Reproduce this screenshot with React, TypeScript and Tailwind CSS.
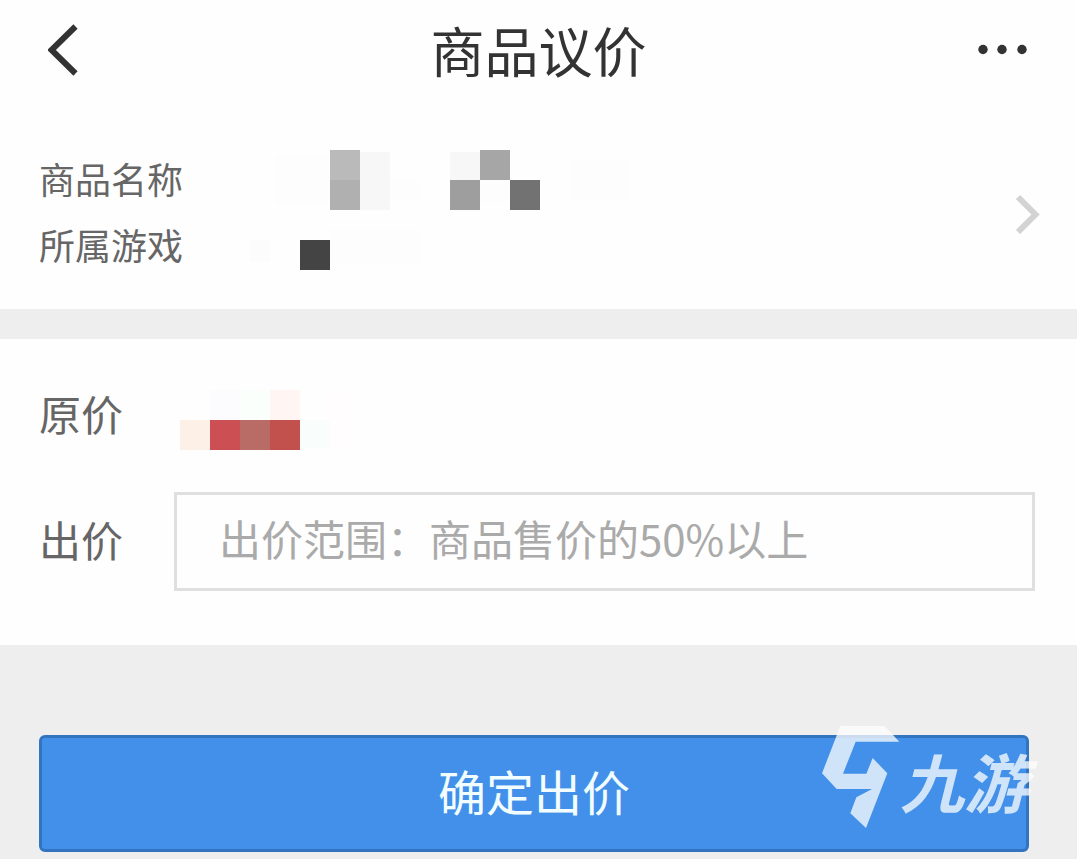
import { useState } from 'react';

// 30px blocks that hide the product name and the game name
const infoBlocks = [
  { x: 35, y: 10, w: 55, h: 50, fill: '#fdfdfd' },
  { x: 90, y: 5, w: 30, h: 30, fill: '#bababa' },
  { x: 90, y: 35, w: 30, h: 30, fill: '#b0b0b0' },
  { x: 120, y: 7, w: 30, h: 58, fill: '#f7f7f7' },
  { x: 150, y: 35, w: 30, h: 20, fill: '#fdfdfd' },
  { x: 210, y: 7, w: 30, h: 28, fill: '#f7f7f7' },
  { x: 240, y: 5, w: 30, h: 30, fill: '#a6a6a6' },
  { x: 210, y: 35, w: 30, h: 30, fill: '#9e9e9e' },
  { x: 240, y: 35, w: 30, h: 22, fill: '#fdfdfd' },
  { x: 270, y: 35, w: 30, h: 30, fill: '#727272' },
  { x: 330, y: 14, w: 60, h: 40, fill: '#fdfdfd' },
  { x: 10, y: 95, w: 20, h: 22, fill: '#fcfcfc' },
  { x: 60, y: 95, w: 30, h: 30, fill: '#444444' },
  { x: 90, y: 84, w: 90, h: 36, fill: '#fdfdfd' },
];

const priceBlocks = [
  { x: 36, y: 7, w: 30, h: 30, fill: '#fcfcff' },
  { x: 66, y: 7, w: 30, h: 30, fill: '#fafffc' },
  { x: 96, y: 7, w: 30, h: 30, fill: '#fff6f3' },
  { x: 6, y: 37, w: 30, h: 30, fill: '#fdf1e7' },
  { x: 36, y: 37, w: 30, h: 30, fill: '#cb4f53' },
  { x: 66, y: 37, w: 30, h: 30, fill: '#b96b66' },
  { x: 96, y: 37, w: 30, h: 30, fill: '#c2504c' },
  { x: 126, y: 37, w: 30, h: 28, fill: '#f9fefc' },
  { x: 156, y: 7, w: 26, h: 56, fill: '#fffdfd' },
];

type Block = { x: number; y: number; w: number; h: number; fill: string };

function Mosaic({ blocks, width, height }: { blocks: Block[]; width: number; height: number }) {
  return (
    <svg width={width} height={height} className="shrink-0" shapeRendering="crispEdges" aria-hidden="true">
      {blocks.map(b => (
        <rect key={`${b.x}-${b.y}`} x={b.x} y={b.y} width={b.w} height={b.h} fill={b.fill} />
      ))}
    </svg>
  );
}

function Header() {
  return (
    <header className="grid h-[100px] grid-cols-[1fr_auto_1fr] items-center px-12">
      <button type="button" aria-label="返回" className="justify-self-start">
        <svg width="30" height="52" viewBox="0 0 30 52" fill="none" stroke="#333333" strokeWidth="6">
          <path d="M27.5 2.5 L3.5 26 L27.5 49.5" />
        </svg>
      </button>
      <h1 className="text-[54px] leading-none text-[#333333]">商品议价</h1>
      <button type="button" aria-label="更多" className="justify-self-end">
        <svg width="52" height="12" viewBox="0 0 52 12" fill="#333333">
          <circle cx="6" cy="5.5" r="4.7" />
          <circle cx="25" cy="5.5" r="4.7" />
          <circle cx="45" cy="5.5" r="4.7" />
        </svg>
      </button>
    </header>
  );
}

function ProductInfo() {
  return (
    <a href="#product" className="flex items-center justify-between pt-[45px] pr-9 pb-8 pl-[39px]">
      <div className="flex">
        <div className="w-[201px] text-4xl leading-[66px] text-[#666666]">
          <p>商品名称</p>
          <p>所属游戏</p>
        </div>
        <Mosaic blocks={infoBlocks} width={390} height={132} />
      </div>
      <svg width="26" height="46" viewBox="0 0 26 46" fill="none" stroke="#d3d3d3" strokeWidth="6" aria-hidden="true">
        <path d="M3 9 L20.5 26.5 L3 44" />
      </svg>
    </a>
  );
}

function Watermark() {
  return (
    <div className="pointer-events-none absolute top-[81px] right-[49px] flex text-white opacity-75">
      <svg width="78" height="102" viewBox="0 0 234 306" fill="currentColor" aria-hidden="true">
        <path d="M55 0 H188 L232 47 H101 L63 143 H133 L152 96 L196 142 L132 306 L85 262 L103 214 L150 189 H44 L0 142 Z" />
      </svg>
      <span className="pt-6 text-[64px] leading-[60px] font-bold italic">九游</span>
    </div>
  );
}

export default function App() {
  const [offer, setOffer] = useState('');

  return (
    <div className="min-h-screen bg-[#eeeeee] font-['Noto_Sans_CJK_SC',sans-serif]">
      <div className="bg-[#fefefe]">
        <Header />
        <ProductInfo />
      </div>

      <form onSubmit={e => e.preventDefault()}>
        <div className="mt-[30px] bg-[#fefefe] pt-11 pr-[42px] pb-[54px] pl-[39px] text-[42px] text-[#666666]">
          <div className="flex">
            <span className="w-[135px] leading-[60px]">原价</span>
            <Mosaic blocks={priceBlocks} width={186} height={67} />
          </div>
          <div className="mt-[42px] flex">
            <label htmlFor="offer" className="w-[135px] shrink-0 leading-[94px]">出价</label>
            <input
              id="offer"
              type="text"
              inputMode="decimal"
              value={offer}
              onChange={e => setOffer(e.target.value)}
              placeholder="出价范围：商品售价的50%以上"
              className="h-[99px] min-w-0 flex-1 border-[3px] border-[#dfdfdf] bg-transparent px-[42px] pb-2 outline-none placeholder:text-[#aaaaaa]"
            />
          </div>
        </div>

        <div className="relative pt-[90px] pr-12 pb-[7px] pl-[39px]">
          <button
            type="submit"
            className="h-[117px] w-full rounded-md border-[3px] border-[#3274c0] bg-[#4290ea] pb-2 text-5xl text-[#f2fdff]"
          >
            确定出价
          </button>
          <Watermark />
        </div>
      </form>
    </div>
  );
}
